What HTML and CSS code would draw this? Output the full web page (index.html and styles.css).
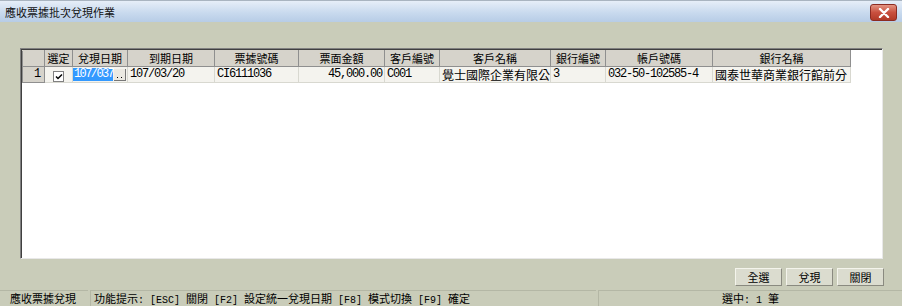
FILE: index.html
```html
<!DOCTYPE html>
<html>
<head lang="zh-Hant">
    <meta charset="utf-8">
    <title>應收票據批次兌現作業</title>
    <link rel="stylesheet" href="styles.css">
</head>
<body>
<div class="window">
    <div class="titlebar">
        <span class="title">應收票據批次兌現作業</span>
        <span class="close">
            <svg width="12" height="10" viewBox="0 0 12 10"><path d="M2 1 L10 9 M10 1 L2 9" stroke="#fff" stroke-width="2.4" stroke-linecap="round"/></svg>
        </span>
    </div>
    <div class="main">
        <div class="grid">
            <table>
                <colgroup>
                    <col style="width:22px">
                    <col style="width:28px">
                    <col style="width:55px">
                    <col style="width:87px">
                    <col style="width:84px">
                    <col style="width:86px">
                    <col style="width:55px">
                    <col style="width:111px">
                    <col style="width:55px">
                    <col style="width:107px">
                    <col style="width:138px">
                </colgroup>
                <tr class="head">
                    <th></th>
                    <th>選定</th>
                    <th>兌現日期</th>
                    <th>到期日期</th>
                    <th>票據號碼</th>
                    <th>票面金額</th>
                    <th>客戶編號</th>
                    <th>客戶名稱</th>
                    <th>銀行編號</th>
                    <th>帳戶號碼</th>
                    <th>銀行名稱</th>
                </tr>
                <tr class="row">
                    <td class="num m">1</td>
                    <td class="chk"><span class="box">
                        <svg width="8" height="8" viewBox="0 0 8 8"><path d="M1 3.5 L3 5.5 L7 1.5" stroke="#000" stroke-width="1.5" fill="none"/></svg>
                    </span></td>
                    <td class="edit"><div class="editor"><span class="sel m">107/037</span><span class="dots"><svg width="11" height="11" viewBox="0 0 11 11"><rect x="3" y="8" width="1" height="1" fill="#000"/><rect x="7" y="8" width="1" height="1" fill="#000"/></svg></span></div></td>
                    <td class="m">107/03/20</td>
                    <td class="m">CI6111036</td>
                    <td class="money m">45,000.00</td>
                    <td class="m">C001</td>
                    <td class="cut">覺士國際企業有限公</td>
                    <td class="m">3</td>
                    <td class="m">032-50-102585-4</td>
                    <td class="cut">國泰世華商業銀行館前分</td>
                </tr>
            </table>
        </div>
        <div class="actions">
            <div class="btn">全選</div>
            <div class="btn">兌現</div>
            <div class="btn">關閉</div>
        </div>
    </div>
    <div class="statusbar">
        <div class="panel first">應收票據兌現</div>
        <div class="panel hint">功能提示<span class="s">: [ESC] </span>關閉<span class="s"> [F2] </span>設定統一兌現日期<span class="s"> [F8] </span>模式切換<span class="s"> [F9] </span>確定</div>
        <div class="panel count">選中<span class="s">: 1 </span>筆</div>
    </div>
</div>
</body>
</html>
```

FILE: styles.css
```css
body {
    margin: 0;
    font-family: "Noto Sans CJK TC", "Noto Sans CJK SC", sans-serif;
    font-size: 11px;
    color: #000;
}

.window {
    width: 902px;
    height: 306px;
    background: #c9ccb9;
    display: flex;
    flex-direction: column;
    overflow: hidden;
}

.titlebar {
    height: 22px;
    display: flex;
    align-items: center;
    justify-content: space-between;
    background: linear-gradient(#e6eef8, #c9daee 55%, #b7cce6);
    border-top: 1px solid #a9b4c0;
    box-sizing: border-box;
    padding: 0 5px 0 5px;
}

.title {
    font-size: 11px;
    line-height: 14px;
    color: #111;
}

.close {
    width: 25px;
    height: 15px;
    margin-top: 2px;
    border-radius: 3px;
    border: 1px solid #8b2b22;
    background: linear-gradient(#e39482, #c9503f 50%, #b23a28);
    display: flex;
    align-items: center;
    justify-content: center;
}

.main {
    flex: 1;
    display: flex;
    flex-direction: column;
    padding: 26px 18px 0 20px;
}

.grid {
    height: 211px;
    box-sizing: border-box;
    background: #fff;
    border-top: 1px solid #808080;
    border-left: 1px solid #808080;
    border-right: 1px solid #e8e8e8;
    border-bottom: 1px solid #e8e8e8;
    box-shadow: inset 1px 1px 0 #404040;
    padding: 1px 0 0 1px;
    margin-right: 1px;
}

table {
    border-collapse: collapse;
    table-layout: fixed;
    width: 828px;
    font-size: 12px;
}

th, td {
    border: 1px solid #8f8f8f;
    padding: 0 2px;
    white-space: nowrap;
    overflow: hidden;
    height: 15px;
    line-height: 15px;
}

.m {
    font-family: "Liberation Mono", monospace;
    letter-spacing: -1.2px;
}

.s {
    font-family: "Liberation Mono", monospace;
    font-size: 10px;
}

.head th {
    background: #d6d3cb;
    font-weight: normal;
    font-size: 11px;
    border-top-color: #d6d3cb;
}

.row td {
    background: #f4f3ee;
    border-color: #d8d8d0;
}

.row td.num {
    background: #d6d3cb;
    border-color: #8f8f8f;
    text-align: right;
    padding-right: 4px;
}

.chk {
    text-align: center;
}

.box {
    display: inline-flex;
    width: 9px;
    height: 9px;
    border: 1px solid #808080;
    background: #fff;
    align-items: center;
    justify-content: center;
    vertical-align: middle;
}

.row td.edit {
    padding: 0;
}

.editor {
    display: flex;
    align-items: center;
    gap: 1px;
    height: 15px;
}

.sel {
    background: #3399ff;
    color: #fff;
    padding: 0 0 0 1px;
    letter-spacing: -1.6px;
    line-height: 13px;
}

.dots {
    display: flex;
    width: 11px;
    height: 11px;
    background: #ebe9e2;
    border-right: 1px solid #777;
    border-bottom: 1px solid #777;
    margin-left: auto;
    margin-right: 1px;
}

.money {
    text-align: right;
}

.actions {
    display: flex;
    justify-content: flex-end;
    gap: 4px;
    margin-top: 9px;
}

.btn {
    width: 47px;
    height: 18px;
    box-sizing: border-box;
    line-height: 16px;
    text-align: center;
    background: #dbdccf;
    border-top: 1px solid #f4f4ec;
    border-left: 1px solid #f4f4ec;
    border-right: 1px solid #8a8a80;
    border-bottom: 1px solid #8a8a80;
    font-size: 11px;
}

.statusbar {
    height: 16px;
    display: flex;
    gap: 2px;
    margin-top: 4px;
    background: #c9ccb9;
}

.panel {
    height: 16px;
    line-height: 15px;
    border-top: 1px solid #b4b7a5;
    border-left: 1px solid #b4b7a5;
    box-sizing: border-box;
    font-size: 11px;
    white-space: nowrap;
}

.first {
    width: 88px;
    padding-left: 10px;
    border-left: none;
}

.hint {
    width: 506px;
    padding-left: 3px;
}

.count {
    flex: 1;
    text-align: center;
}
```
